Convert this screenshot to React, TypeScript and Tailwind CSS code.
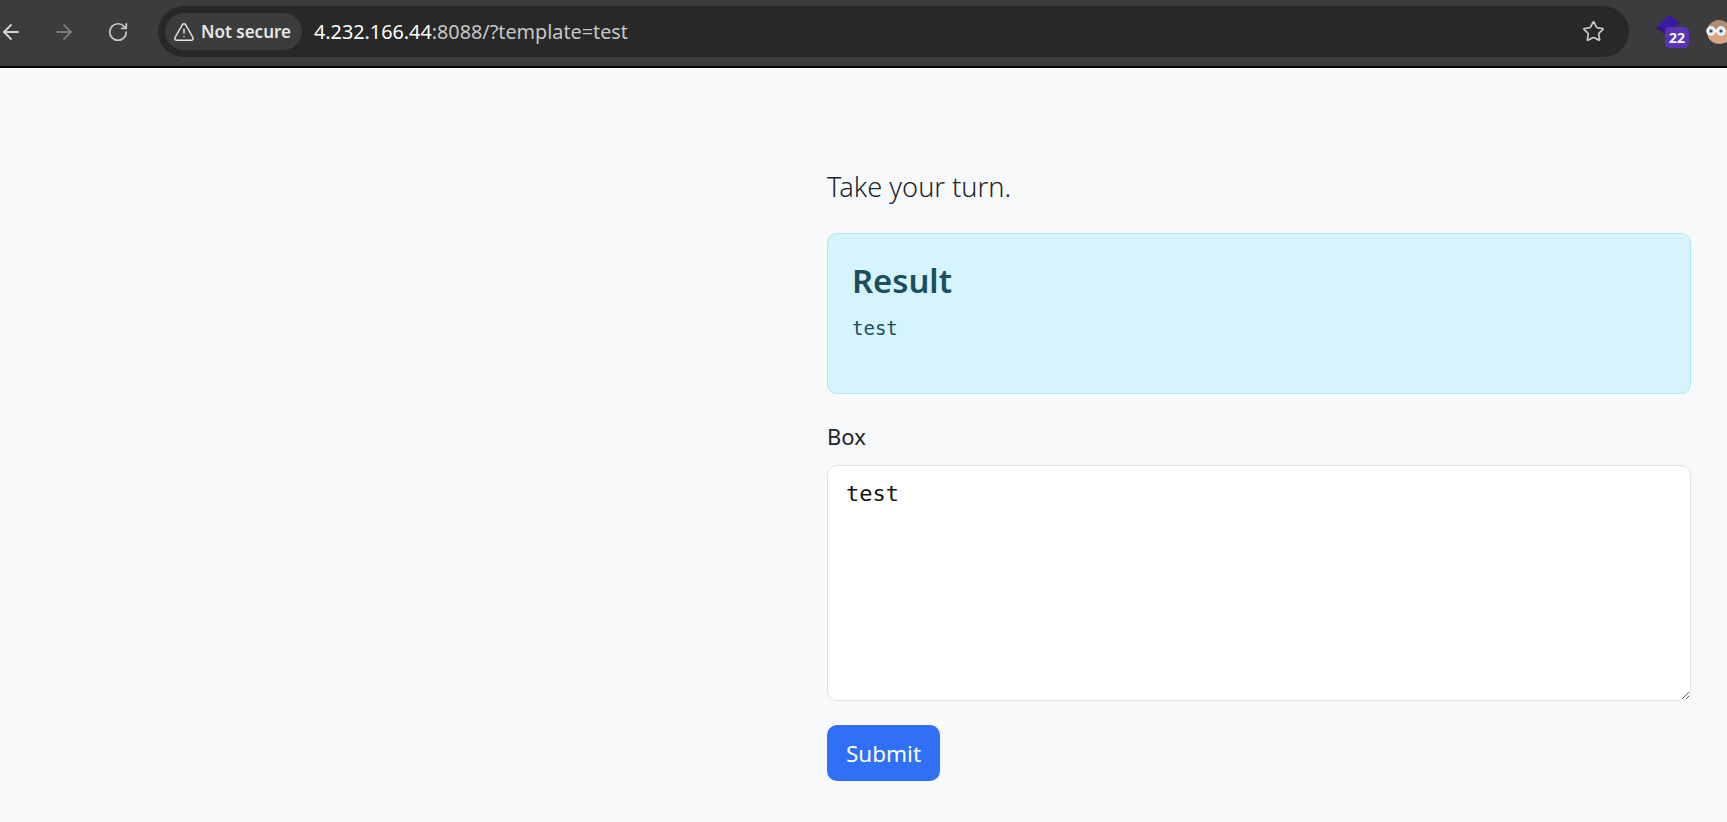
import { ArrowLeft, ArrowRight, RotateCw, Star, TriangleAlert } from 'lucide-react';

function ExtensionBadge() {
  return (
    <div className="relative w-[33px] h-[34px] shrink-0">
      <svg width="26" height="24" viewBox="0 0 26 24" className="absolute left-0 top-0">
        <path d="M13 0 L24 8 L13 18 L2 10 Z" fill="#3a1a9e" />
        <path d="M4 11 L0 13 L10 20 L13 18 Z" fill="#2f1585" />
      </svg>
      <div className="absolute left-[9px] top-[12px] w-[24px] h-[21px] rounded-[5px] bg-[#5b34b5] flex items-center justify-center text-white text-[14px] font-bold font-['Noto_Sans',sans-serif]">
        22
      </div>
    </div>
  );
}

function Avatar() {
  return (
    <svg width="24" height="26" viewBox="0 0 24 26" className="shrink-0">
      <circle cx="14" cy="13" r="12" fill="#b09070" />
      <path d="M3 14 C3 8 24 8 24 14 L24 22 C18 26 8 26 3 18 Z" fill="#d8a585" />
      <path d="M3 12 H20" stroke="#ffffff" strokeWidth="1.2" />
      <circle cx="6" cy="12" r="4" fill="#cfe6ee" stroke="#ffffff" strokeWidth="1.5" />
      <circle cx="16" cy="12" r="4" fill="#cfe6ee" stroke="#ffffff" strokeWidth="1.5" />
      <circle cx="6" cy="12" r="1.5" fill="#35505a" />
      <circle cx="16" cy="12" r="1.5" fill="#35505a" />
    </svg>
  );
}

function Toolbar() {
  return (
    <header className="h-[68px] bg-[#3c3c3c] border-b-2 border-black flex items-center pb-[3px] overflow-hidden font-['Noto_Sans',sans-serif]">
      <div className="flex items-center w-[158px] shrink-0 -ml-[1px]">
        <ArrowLeft size={24} strokeWidth={1.8} className="text-[#d6d6d6]" />
        <ArrowRight size={24} strokeWidth={1.8} className="text-[#7a7a7a] ml-[29px]" />
        <RotateCw size={22} strokeWidth={1.9} className="text-[#c8c8c8] ml-[31px]" />
      </div>
      <div className="w-[1471px] h-[51px] shrink-0 ml-[1px] bg-[#282828] rounded-full flex items-center pl-[7px] pr-[24px]">
        <div className="h-[37px] w-[137px] rounded-full bg-[#3c3c3c] flex items-center gap-[6px] pl-[8px] text-[#e6e6e6]">
          <TriangleAlert size={22} strokeWidth={1.6} />
          <span className="text-[17px] font-semibold whitespace-nowrap">Not secure</span>
        </div>
        <div className="ml-[12px] text-[19.8px] text-[#c7c7c7] whitespace-nowrap flex-1">
          <span className="text-white">4.232.166.44</span>:8088/?template=test
        </div>
        <Star size={23} strokeWidth={1.8} className="text-[#c8c8c8]" />
      </div>
      <div className="ml-[27px] flex items-center gap-[16px]">
        <ExtensionBadge />
        <Avatar />
      </div>
    </header>
  );
}

export default function App() {
  return (
    <div className="h-[822px] overflow-hidden bg-[#f8f9fa] text-[#212529]">
      <Toolbar />
      <main className="flex justify-end pr-[36px] font-['Noto_Sans',sans-serif]">
        <div className="w-[864px] pt-[101px]">
          <p className="text-[27.2px] leading-[36px] font-light text-[#212529]">Take your turn.</p>
          <div className="mt-[28px] h-[161px] rounded-[10px] border border-[#b0e7f4] bg-[#d5f4fc] px-[24px] pt-[27px] text-[#1c4f5e]">
            <h4 className="text-[32.8px] leading-[40px] font-semibold">Result</h4>
            <pre className="mt-[15px] text-[19px] leading-[1.3] font-['DejaVu_Sans_Mono',monospace]">test</pre>
          </div>
          <label className="block mt-[28px] text-[22px] leading-[1.3]">Box</label>
          <textarea
            defaultValue="test"
            className="block mt-[14px] w-full h-[236px] rounded-[10px] border border-[#dee2e6] bg-white px-[18px] py-[13px] text-[22px] leading-[1.4] text-[#111] font-['DejaVu_Sans_Mono',monospace] resize-y outline-none"
          />
          <button className="mt-[24px] h-[56px] w-[113px] rounded-[10px] bg-[#2f70f7] text-white text-[22.5px] pt-[2px]">Submit</button>
        </div>
      </main>
    </div>
  );
}
